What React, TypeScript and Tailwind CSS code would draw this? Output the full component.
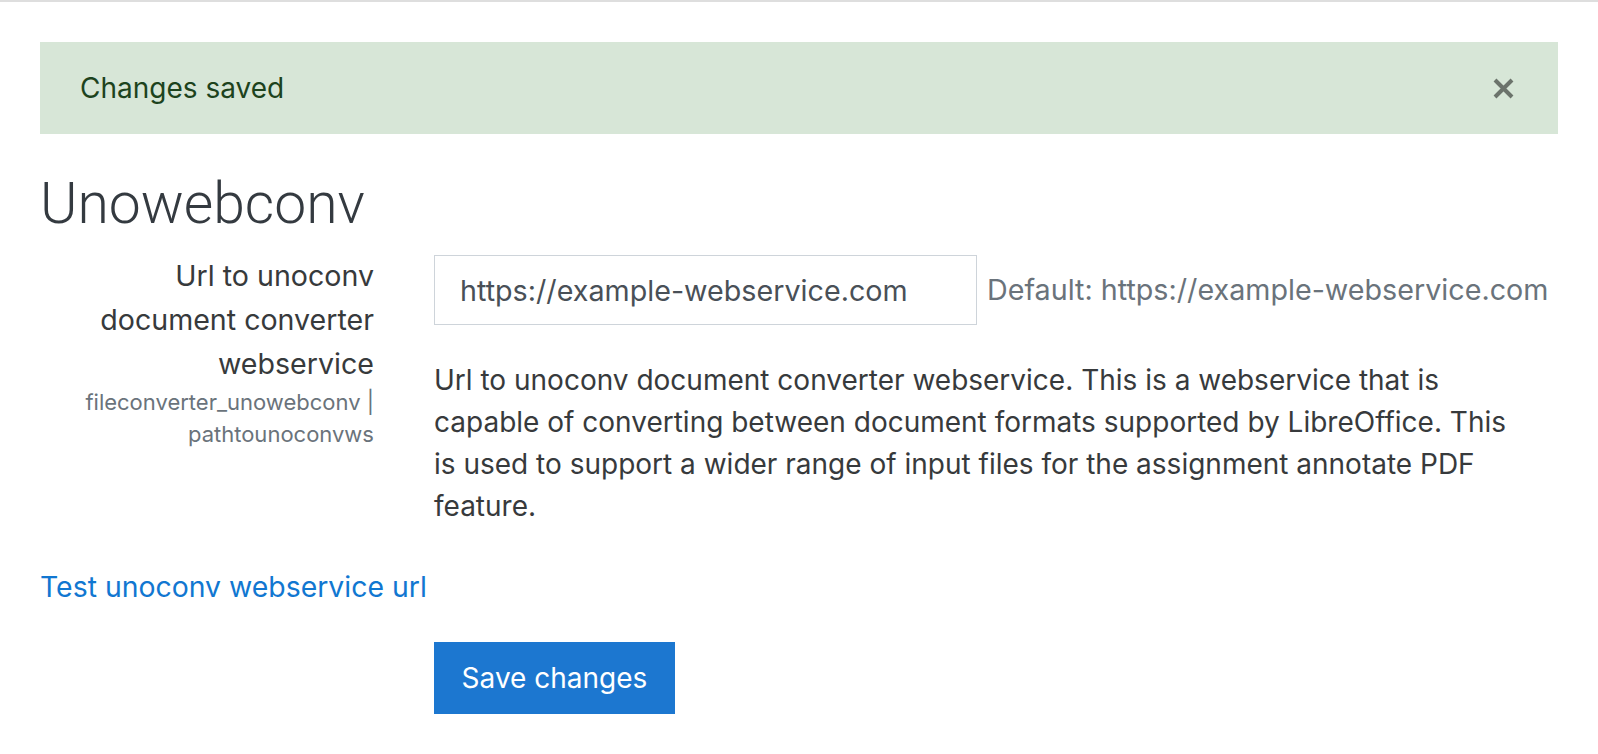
import React from 'react'

export default function App() {
  return (
    <div className="min-h-screen bg-white border-t-2 border-[#dedede] font-['Inter','Noto_Sans',sans-serif] text-[#373a3c]">
      <div className="px-10 pt-10">
        {/* Alert */}
        <div className="h-[92px] bg-[#d7e6d7] flex items-center justify-between pl-10 pr-[44px]">
          <span className="text-[28px] leading-[42px] text-[#1d431d]">Changes saved</span>
          <button className="text-[#6b736b]" aria-label="Close">
            <svg className="w-[21px] h-[21px]" viewBox="0 0 21 21" fill="none" stroke="currentColor" strokeWidth={4}>
              <path d="M2 2l17 17M19 2L2 19" />
            </svg>
          </button>
        </div>

        {/* Heading */}
        <h2 className="mt-[36px] font-['Roboto',sans-serif] text-[57px] leading-[67px] font-light text-[#343a40]">Unowebconv</h2>

        {/* Setting row */}
        <div className="mt-[17px] flex">
          <div className="w-[334px] shrink-0 pl-6 text-right">
            <div className="text-[28.6px] leading-[44px]">Url to unoconv document converter webservice</div>
            <div className="text-[22px] leading-[32px] text-[#6a737b]">fileconverter_unowebconv | pathtounoconvws</div>
          </div>
          <div className="ml-[60px] flex-1 pt-px">
            <div className="flex items-center gap-[10px]">
              <input
                type="text"
                defaultValue="https://example-webservice.com"
                className="w-[543px] h-[70px] border border-[#ced4da] px-[25px] text-[28.7px] text-[#495057] outline-none"
              />
              <span className="text-[28.7px] text-[#6a737b]">Default: https://example-webservice.com</span>
            </div>
            <p className="mt-[34px] max-w-[1088px] text-[28px] leading-[42px]">
              Url to unoconv document converter webservice. This is a webservice that is capable of converting between
              document formats supported by LibreOffice. This is used to support a wider range of input files for the
              assignment annotate PDF feature.
            </p>
          </div>
        </div>

        {/* Test link */}
        <div className="mt-[39px]">
          <a href="#" className="text-[28.4px] leading-[42px] text-[#1177d1]">Test unoconv webservice url</a>
        </div>

        {/* Save button */}
        <div className="mt-[34px] pl-[394px]">
          <button className="h-[72px] w-[241px] bg-[#1c77d0] text-white text-[28px]">Save changes</button>
        </div>
      </div>
    </div>
  )
}
